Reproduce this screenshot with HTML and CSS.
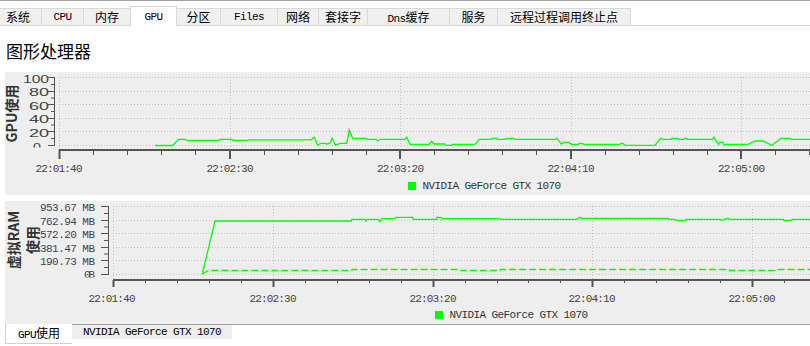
FILE: index.html
```html
<!doctype html>
<html lang="zh">
<head>
<meta charset="utf-8">
<title>GPU</title>
<link rel="stylesheet" href="styles.css">
</head>
<body>
<div class="page">
<nav class="tabs">
<span class="tab">系统</span>
<span class="tab en">CPU</span>
<span class="tab">内存</span>
<span class="tab en active">GPU</span>
<span class="tab">分区</span>
<span class="tab en">Files</span>
<span class="tab">网络</span>
<span class="tab">套接字</span>
<span class="tab"><span class="en">Dns</span>缓存</span>
<span class="tab">服务</span>
<span class="tab">远程过程调用终止点</span>
</nav>

<h1 class="title">图形处理器</h1>

<section class="panel gpu">
<svg class="chart" width="905" height="107" viewBox="5 72 905 107">
<defs><clipPath id="clip-gpu"><rect x="5" y="72" width="48" height="75.5"/></clipPath></defs>
<text class="axis-title" transform="translate(17 113.5) rotate(-90)">GPU使用</text>
<g class="tick-label" clip-path="url(#clip-gpu)">
<text x="49" y="82.5" textLength="26" lengthAdjust="spacingAndGlyphs">100</text>
<text x="49" y="96" textLength="20" lengthAdjust="spacingAndGlyphs">80</text>
<text x="49" y="109.5" textLength="20" lengthAdjust="spacingAndGlyphs">60</text>
<text x="49" y="123" textLength="20" lengthAdjust="spacingAndGlyphs">40</text>
<text x="49" y="136.5" textLength="20" lengthAdjust="spacingAndGlyphs">20</text>
<text x="41" y="150.5" textLength="8" lengthAdjust="spacingAndGlyphs">0</text>
</g>
<path class="grid" d="M59 77.5H910M59 91.5H910M59 104.5H910M59 118.5H910M59 131.5H910M59 145.5H910"/>
<path class="grid" d="M59.5 77V150M230.5 77V150M400.5 77V150M571.5 77V150M741.5 77V150"/>
<path class="axis" d="M54.5 77V146M48 77.5H54M48 91.5H54M48 104.5H54M48 118.5H54M48 131.5H54M48 145.5H54M51 84.5H54M51 98H54M51 111.5H54M51 125H54M51 138.5H54"/>
<path class="axis thick" d="M59 150H910"/>
<path class="axis" d="M93.5 150v5M127.5 150v5M161.5 150v5M195.5 150v5M264.5 150v5M298.5 150v5M332.5 150v5M366.5 150v5M434.5 150v5M468.5 150v5M502.5 150v5M536.5 150v5M605.5 150v5M639.5 150v5M673.5 150v5M707.5 150v5M775.5 150v5M809.5 150v5M843.5 150v5M877.5 150v5"/>
<path class="axis major" d="M59.5 150v9M230 150v9M400 150v9M571 150v9M741 150v9"/>
<g class="time-label">
<text x="59" y="171.5" textLength="47">22:01:40</text>
<text x="230" y="171.5" textLength="47">22:02:30</text>
<text x="400.5" y="171.5" textLength="47">22:03:20</text>
<text x="571" y="171.5" textLength="47">22:04:10</text>
<text x="741.5" y="171.5" textLength="47">22:05:00</text>
</g>
<path class="series" d="M155 145.5H172.7L178.5 139.3H185L186 140.3H219L220 139.3H232L233 140.3H247L248 139.8H311L314.3 137.3L317.7 145.3L321 143.3H325L327 144L330 143.3L332.3 138.3L335.3 145L339 144L340 143.3H346.7L349.3 130.3L352.7 138.3H366L367 139.3H376L378 140.7L380 139.3H405L406.7 137.3L410 144.3H429.3L431.3 141.3L434.3 144H445L446 145.3H451.7L452.5 144.3H475L479.3 139.3H491.7L492 138.3H497L497.3 139.3H506L506.5 138.3H514L514.5 139.3H555L557 138.3L561.7 144.3L563.3 142.3H568.3L571.7 144.3H578.3L579 143.3H582.7L583.5 144.3H620L621 143.3H623L625.3 145.3H655L660.7 138.3L663 139.3H671.7L672 138.3H678L678.5 139.3H684L684.5 138.3H686.7L687 139.3H712.7L714 137.3L718.3 144.3L720 142.3H723L724.3 145.3L726 144.3H748.3L755 141H763.3L771.7 145.3L780 139.3L781 138.3H790L791 139.3H910"/>
</svg>
<div class="legend"><i class="swatch"></i><span>NVIDIA GeForce GTX 1070</span></div>
</section>

<section class="panel ram">
<svg class="chart" width="905" height="107" viewBox="5 201 905 107">
<defs><clipPath id="clip-ram"><rect x="5" y="201" width="96" height="76.5"/></clipPath></defs>
<text class="axis-title" transform="translate(18.5 240) rotate(-90)">虚拟RAM</text>
<text class="axis-title" transform="translate(37.5 240) rotate(-90)">使用</text>
<g class="mono-label" clip-path="url(#clip-ram)">
<text x="95" y="211" textLength="55">953.67 MB</text>
<text x="95" y="224.5" textLength="55">762.94 MB</text>
<text x="95" y="238" textLength="55">572.20 MB</text>
<text x="95" y="251.5" textLength="55">381.47 MB</text>
<text x="95" y="265" textLength="55">190.73 MB</text>
<text x="95" y="278" textLength="11">0B</text>
</g>
<path class="grid" d="M113 206.5H910M113 220.5H910M113 233.5H910M113 247.5H910M113 260.5H910M113 274.5H910"/>
<path class="grid" d="M113.5 206V280M273.5 206V280M433.5 206V280M592.5 206V280M752.5 206V280"/>
<path class="axis" d="M108.5 206V275M101 206.5H108M101 220.5H108M101 233.5H108M101 247.5H108M101 260.5H108M101 274.5H108M104 213.5H108M104 227H108M104 240.5H108M104 254H108M104 267.5H108"/>
<path class="axis thick" d="M113 280H910"/>
<path class="axis" d="M145.5 280v3M177.5 280v3M209.5 280v3M241.5 280v3M305.5 280v3M337.5 280v3M369.5 280v3M401.5 280v3M465.5 280v3M497.5 280v3M528.5 280v3M560.5 280v3M624.5 280v3M656.5 280v3M688.5 280v3M720.5 280v3M784.5 280v3M816.5 280v3M848.5 280v3M880.5 280v3"/>
<path class="axis major" d="M113.5 280v7M273.5 280v7M433.5 280v7M592.5 280v7M752.5 280v7"/>
<g class="time-label">
<text x="112" y="301.5" textLength="47">22:01:40</text>
<text x="273" y="301.5" textLength="47">22:02:30</text>
<text x="433" y="301.5" textLength="47">22:03:20</text>
<text x="592" y="301.5" textLength="47">22:04:10</text>
<text x="752" y="301.5" textLength="47">22:05:00</text>
</g>
<path class="series" d="M202.3 274L215 221H351L352 219.3H365L366 221L367 219.3H378.3L380 221.7L382 218.7H395L396 217.3H412.7L413 219.3H436.7L437 217.3H441L442 218.7H500L501 219.3H576.7L580 217.3L582 218.3H668.3L669 219.3H675L676 220.3H685.7L686 219.3H720L722 220.3L728 218.3L730 219.3H783.3L784 220.3H791.7L792 219.3H910"/>
<path class="series dashed" d="M202.3 274L208.3 270.5H351.7L352 269.5H460L460.3 270.5H500L500.3 269.5H729.3L729.6 270.5H777.3L777.6 269.5H910"/>
</svg>
<div class="legend"><i class="swatch"></i><span>NVIDIA GeForce GTX 1070</span></div>
</section>

<nav class="subtabs">
<span class="subtab active"><span class="en">GPU</span>使用</span>
<span class="subtab en">NVIDIA GeForce GTX 1070</span>
</nav>
</div>
</body>
</html>
```

FILE: styles.css
```css
* { box-sizing:border-box; margin:0; }
body { overflow:hidden; background:#fff; color:#000; font:12px 'Noto Sans CJK SC', sans-serif; }
.page { width:915px; }
.en { font:11px 'Liberation Mono', monospace; letter-spacing:-0.6px; }

/* top tab strip */
.tabs { display:flex; align-items:flex-end; height:26px; border-top:1px solid #a0a0a0; border-bottom:1px solid #d9d9d9; }
.tab { height:17px; line-height:16px; text-align:center; white-space:nowrap; background:#f0f0f0; border:1px solid #d9d9d9; border-bottom:0; margin-right:-1px; }
.tab.active { height:20px; padding-top:2px; margin-bottom:-1px; background:#fff; position:relative; z-index:1; }
.tab:nth-child(1) { width:48px; margin-left:-6px; }
.tab:nth-child(2) { width:43px; }
.tab:nth-child(3) { width:48px; }
.tab:nth-child(4) { width:47px; }
.tab:nth-child(5) { width:45px; }
.tab:nth-child(6) { width:58px; }
.tab:nth-child(7) { width:42px; }
.tab:nth-child(8) { width:50px; }
.tab:nth-child(9) { width:83px; }
.tab:nth-child(10) { width:49px; }
.tab:nth-child(11) { width:134px; }

.title { font:400 17px 'Noto Sans CJK SC', sans-serif; line-height:24px; height:46px; padding:13px 0 0 6px; }

/* chart panels */
.panel { width:905px; height:123px; margin-left:5px; background:#eee; display:flex; flex-direction:column; }
.panel.gpu { margin-bottom:6px; }
.chart { display:block; flex:none; overflow:visible; }
.legend { height:14px; display:flex; align-items:center; justify-content:center; column-gap:6px; margin-left:54px; font:11px 'Liberation Mono', monospace; letter-spacing:-0.6px; color:#333; }
.ram .legend { margin-left:108px; }
.swatch { width:8px; height:8px; background:#0f0; }

.grid { fill:none; stroke:#c4c4c4; stroke-dasharray:1 2; }
.axis { fill:none; stroke:#555; }
.axis.thick, .axis.major { stroke-width:2; }
.series { fill:none; stroke:#0f0; stroke-width:1.3; }
.series.dashed { stroke-dasharray:7 3; }
.axis-title { font:700 14px 'Noto Sans CJK SC', sans-serif; fill:#333; text-anchor:middle; }
.tick-label text { font:10px 'Liberation Sans', sans-serif; fill:#444; text-anchor:end; }
.mono-label text { font:11px 'Liberation Mono', monospace; fill:#444; text-anchor:end; }
.time-label text { font:11px 'Liberation Mono', monospace; fill:#444; text-anchor:middle; }

/* bottom series tabs */
.subtabs { display:flex; align-items:flex-start; width:805px; margin-left:5px; border-top:1px solid #a0a0a0; }
.subtab { height:14px; line-height:14px; width:160px; text-align:center; background:#eee; }
.subtab.active { width:67px; height:20px; line-height:18px; margin-top:-1px; background:#fff; border:1px solid #d0d0d0; border-top:0; border-right:0; font-size:12px; }
```
